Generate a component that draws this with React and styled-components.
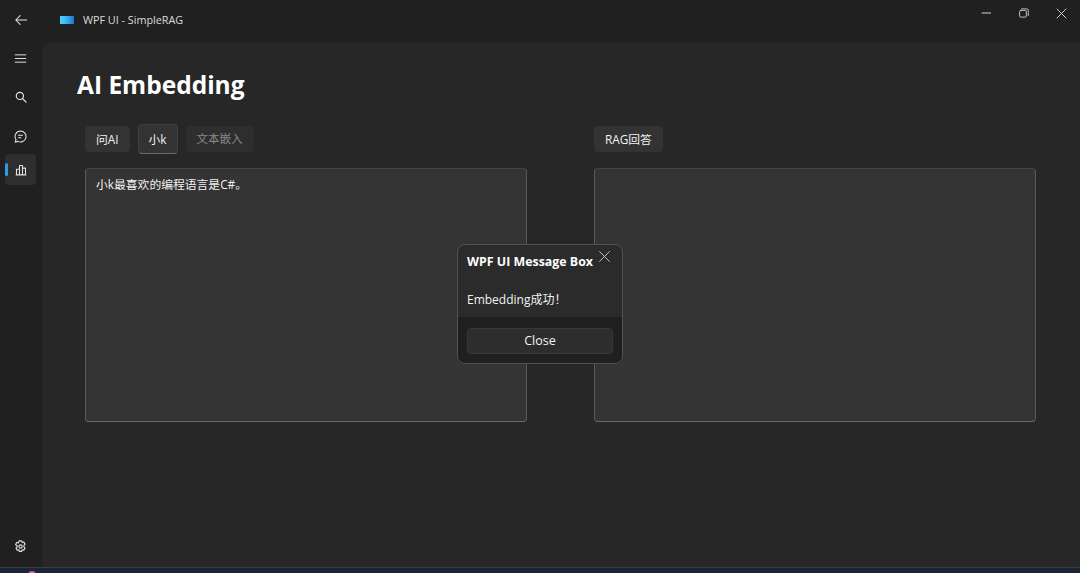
import React from 'react';
import styled, { createGlobalStyle } from 'styled-components';

const Global = createGlobalStyle`
  html, body { margin: 0; padding: 0; background: #202020; }
  body { font-family: "Open Sans", "Noto Sans CJK SC", sans-serif; }
  * { box-sizing: border-box; }
`;

const Screen = styled.div`
  position: relative;
  width: 1080px;
  height: 573px;
  overflow: hidden;
  display: flex;
  flex-direction: column;
`;

const Win = styled.div`
  flex: 1;
  display: flex;
  background: #202020;
  min-height: 0;
`;

const Sidebar = styled.div`
  width: 42px;
  flex-shrink: 0;
  display: flex;
  flex-direction: column;
  align-items: center;
  padding-top: 11px;
  padding-bottom: 12px;
`;

const NavIcon = styled.div`
  position: relative;
  width: 31px;
  height: ${p => p.$h || 31}px;
  margin-right: 1px;
  margin-top: ${p => p.$mt || 0}px;
  border-radius: 4px;
  display: flex;
  align-items: center;
  justify-content: center;
  color: #e2e2e2;
  background: ${p => p.$active ? '#2e2e2e' : 'transparent'};
`;

const ActiveMark = styled.span`
  position: absolute;
  left: 0;
  top: 9px;
  width: 3px;
  height: 13px;
  border-radius: 2px;
  background: #2f9be8;
`;

const Spacer = styled.div`
  flex: 1;
`;

const Main = styled.div`
  flex: 1;
  min-width: 0;
  display: flex;
  flex-direction: column;
`;

const TitleBar = styled.div`
  height: 43px;
  flex-shrink: 0;
  display: flex;
  align-items: flex-start;
  padding-left: 18px;
`;

const Logo = styled.span`
  width: 14px;
  height: 8px;
  margin-top: 16px;
  background: linear-gradient(90deg, #4fd2f7 0%, #3fb4f0 45%, #1c74d0 100%);
`;

const AppName = styled.span`
  margin-left: 9px;
  margin-top: 12px;
  font-size: 10.8px;
  line-height: 15px;
  color: #dcdcdc;
`;

const WinControls = styled.div`
  margin-left: auto;
  display: flex;
  color: #d0d0d0;
`;

const WinBtn = styled.div`
  width: 38px;
  height: 26px;
  display: flex;
  align-items: center;
  justify-content: center;
`;

const Content = styled.div`
  flex: 1;
  background: #272727;
  border-top-left-radius: 8px;
  padding: 25px 44px 0 35px;
`;

const PageTitle = styled.h1`
  margin: 0;
  font-size: 24.5px;
  line-height: 34px;
  font-weight: 700;
  color: #fff;
`;

const Columns = styled.div`
  display: grid;
  grid-template-columns: 442px 442px;
  column-gap: 67px;
  margin-top: 22px;
  margin-left: 8px;
`;

const Column = styled.div`
  display: flex;
  flex-direction: column;
`;

const ButtonRow = styled.div`
  display: flex;
  align-items: center;
  gap: 8px;
  height: 30px;
`;

const Btn = styled.div`
  height: ${p => p.$focused ? 30 : 26}px;
  padding: 0 10px 2px;
  display: flex;
  align-items: center;
  border-radius: 4px;
  font-size: ${p => p.$disabled ? 11.5 : 11.8}px;
  color: ${p => p.$disabled ? '#8a8a8a' : '#f2f2f2'};
  background: ${p => p.$disabled ? '#2e2e2e' : '#333333'};
  border: 1px solid ${p => p.$focused ? '#3e3e3e' : 'transparent'};
  border-bottom-color: ${p => p.$focused ? '#6a6a6a' : 'transparent'};
`;

const TextBox = styled.div`
  height: 254px;
  margin-top: 14px;
  padding: 7px 10px;
  background: #343434;
  border: 1px solid #444444;
  border-bottom: 1px solid #6a6a6a;
  border-right-color: #5a5a5a;
  border-left-color: #5a5a5a;
  border-radius: 4px;
  font-size: 11.8px;
  line-height: 17px;
  color: #f2f2f2;
`;

const Dialog = styled.div`
  position: absolute;
  left: 457px;
  top: 244px;
  width: 166px;
  height: 120px;
  border-radius: 8px;
  border: 1px solid #525252;
  background: #2b2b2b;
  overflow: hidden;
  display: flex;
  flex-direction: column;
`;

const DialogBody = styled.div`
  position: relative;
  height: 72px;
  padding: 8px 9px 0;
`;

const DialogTitle = styled.div`
  font-size: 12.4px;
  line-height: 17px;
  font-weight: 700;
  color: #fff;
  white-space: nowrap;
`;

const DialogClose = styled.div`
  position: absolute;
  right: 11px;
  top: 5px;
  color: #e0e0e0;
  display: flex;
`;

const DialogText = styled.div`
  margin-top: 21px;
  font-size: 12px;
  line-height: 17px;
  color: #f2f2f2;
`;

const DialogFooter = styled.div`
  flex: 1;
  background: #202020;
  padding: 11px 9px 0;
`;

const CloseBtn = styled.div`
  height: 26px;
  padding-bottom: 1px;
  border-radius: 4px;
  background: #2d2d2d;
  border: 1px solid #383838;
  display: flex;
  align-items: center;
  justify-content: center;
  font-size: 12.5px;
  color: #f2f2f2;
`;

const Taskbar = styled.div`
  position: relative;
  height: 6px;
  flex-shrink: 0;
  background: #1a2436;
  border-top: 1px solid #3a3d42;
`;

const TaskDot = styled.span`
  position: absolute;
  left: 28px;
  top: 3px;
  width: 8px;
  height: 8px;
  border-radius: 50%;
  background: #d9688a;
`;

const Svg = ({ size = 14, sw = 1.2, children }) => (
  <svg width={size} height={size} viewBox="0 0 16 16" fill="none" stroke="currentColor" strokeWidth={sw} strokeLinecap="round" strokeLinejoin="round">
    {children}
  </svg>
);

export default function App() {
  return (
    <Screen>
      <Global />
      <Win>
        <Sidebar>
          <NavIcon $h={18}>
            <Svg size={14}><path d="M14.5 8H2M7 3L2 8l5 5" /></Svg>
          </NavIcon>
          <NavIcon $h={18} $mt={20}>
            <Svg size={13}><path d="M1.5 3.5h13M1.5 8h13M1.5 12.5h13" /></Svg>
          </NavIcon>
          <NavIcon $h={18} $mt={21}>
            <Svg size={12} sw={1.6}><circle cx="6.5" cy="6.5" r="4.8" /><path d="M10 10l4.8 4.8" /></Svg>
          </NavIcon>
          <NavIcon $h={18} $mt={21}>
            <Svg size={13} sw={1.3}><path d="M8 1.2a6.8 6.8 0 1 1-3.2 12.8L1.5 15l1-3.2A6.8 6.8 0 0 1 8 1.2z" /><path d="M5.5 6.5h5M5.5 9.5h3" /></Svg>
          </NavIcon>
          <NavIcon $active $mt={9}>
            <ActiveMark />
            <Svg size={12} sw={1.4}><path d="M1.5 14.5h13M2 14.5V7h4v7.5M6 14.5V2h4v12.5M10 14.5V5.5h4v9" /></Svg>
          </NavIcon>
          <Spacer />
          <NavIcon $h={18}>
            <Svg size={13} sw={1.4}><path d="M6.5 1h3l.6 2 2-.5 1.5 2.6-1.4 1.5v1.8l1.4 1.5-1.5 2.6-2-.5-.6 2h-3l-.6-2-2 .5-1.5-2.6 1.4-1.5V7.1L1.9 5.6 3.4 3l2 .5z" /><circle cx="8" cy="8" r="2" /></Svg>
          </NavIcon>
        </Sidebar>
        <Main>
          <TitleBar>
            <Logo />
            <AppName>WPF UI - SimpleRAG</AppName>
            <WinControls>
              <WinBtn>
                <Svg size={12} sw={1.4}><path d="M4 8h11.5" /></Svg>
              </WinBtn>
              <WinBtn>
                <Svg size={12} sw={1.2}><rect x="3.5" y="4.5" width="9" height="9" rx="1.5" /><path d="M6 2.5h7a2 2 0 0 1 2 2v7" /></Svg>
              </WinBtn>
              <WinBtn>
                <Svg size={13} sw={1.2}><path d="M2.5 2.5l11 11M13.5 2.5l-11 11" /></Svg>
              </WinBtn>
            </WinControls>
          </TitleBar>
          <Content>
            <PageTitle>AI Embedding</PageTitle>
            <Columns>
              <Column>
                <ButtonRow>
                  <Btn>问AI</Btn>
                  <Btn $focused>小k</Btn>
                  <Btn $disabled>文本嵌入</Btn>
                </ButtonRow>
                <TextBox>小k最喜欢的编程语言是C#。</TextBox>
              </Column>
              <Column>
                <ButtonRow>
                  <Btn>RAG回答</Btn>
                </ButtonRow>
                <TextBox />
              </Column>
            </Columns>
          </Content>
        </Main>
      </Win>
      <Taskbar>
        <TaskDot />
      </Taskbar>
      <Dialog>
        <DialogBody>
          <DialogTitle>WPF UI Message Box</DialogTitle>
          <DialogClose>
            <Svg size={13} sw={1}><path d="M2 2l12 12M14 2L2 14" /></Svg>
          </DialogClose>
          <DialogText>Embedding成功！</DialogText>
        </DialogBody>
        <DialogFooter>
          <CloseBtn>Close</CloseBtn>
        </DialogFooter>
      </Dialog>
    </Screen>
  );
}
